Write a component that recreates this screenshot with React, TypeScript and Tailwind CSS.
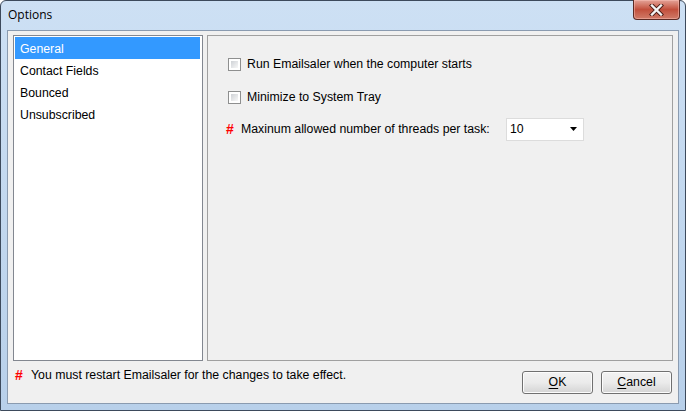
const Check = ({ label }: { label: string }) => (
  <div className="flex items-center gap-[6px] h-[13px]">
    <div className="w-[13px] h-[13px] border border-[#8e8f8f] bg-white p-[2px]">
      <div className="w-full h-full bg-linear-to-br from-[#cfd2d6] to-[#f8f8f8]" />
    </div>
    <span>{label}</span>
  </div>
);

const Button = ({ hot, rest }: { hot: string; rest: string }) => (
  <button className="w-[71px] h-[23px] rounded-[3px] border border-[#707070] bg-linear-to-b from-[#f2f2f2] via-[#ebebeb] to-[#d4d4d4] shadow-[inset_0_0_0_1px_#fcfcfc] text-black leading-none">
    <span className="underline underline-offset-[2px]">{hot}</span>
    {rest}
  </button>
);

const items = ['General', 'Contact Fields', 'Bounced', 'Unsubscribed'];

export default function App() {
  return (
    <div
      className="w-[686px] h-[411px] flex flex-col border border-[#3d4a5c] rounded-t-[6px] bg-linear-to-b from-[#cde0f4] to-[#b8d0ea] text-[12.3px] text-black"
      style={{ fontFamily: '"Liberation Sans", Arial, sans-serif' }}
    >
      {/* title bar */}
      <div className="h-[29px] flex items-start justify-between">
        <span
          className="pl-[7px] pt-[6px] text-[12px] leading-[16px]"
          style={{ fontFamily: '"Segoe UI", "Open Sans", sans-serif' }}
        >
          Options
        </span>
        <div className="mr-[5px] -mt-px w-[47px] h-[20px] rounded-b-[4px] border border-[#5b2a24] border-t-0 bg-linear-to-b from-[#e3a398] via-[#c24f3c] to-[#d07a68] shadow-[inset_0_0_0_1px_rgba(255,200,190,0.45)] flex items-center justify-center">
          <svg width="15" height="12" viewBox="0 0 15 12">
            <path
              d="M3 1.5 L12 10.5 M12 1.5 L3 10.5"
              stroke="#4a1d16"
              strokeWidth="4.2"
              strokeLinecap="square"
              fill="none"
            />
            <path
              d="M3 1.5 L12 10.5 M12 1.5 L3 10.5"
              stroke="#f4f4f4"
              strokeWidth="2.4"
              strokeLinecap="square"
              fill="none"
            />
          </svg>
        </div>
      </div>

      {/* client area */}
      <div className="mx-[6px] mb-[6px] flex-1 border border-[#8a9bb0] bg-[#f0f0f0] flex flex-col">
        <div className="flex pt-[4px] pl-[5px] gap-[4px]">
          <div className="w-[190px] h-[326px] border border-[#828790] bg-white pl-px pr-[2px] pt-[1px]">
            {items.map((it, i) => (
              <div
                key={it}
                className={
                  i === 0
                    ? 'h-[22px] flex items-center pl-[5px] pt-[2px] bg-[#3399ff] text-white'
                    : 'h-[22px] flex items-center pl-[5px] pt-[2px]'
                }
              >
                {it}
              </div>
            ))}
          </div>

          <div className="w-[466px] h-[326px] border border-[#a0a0a0] pt-[22px] pl-[20px]">
            <Check label="Run Emailsaler when the computer starts" />
            <div className="mt-[20px]">
              <Check label="Minimize to System Tray" />
            </div>
            <div className="mt-[14px] -ml-[2px] flex items-center">
              <span className="text-[#ff0000] font-bold text-[14px] w-[15px]">#</span>
              <span>Maxinum allowed number of threads per task:</span>
              <div className="ml-auto mr-[88px] w-[78px] h-[23px] bg-white border border-[#dcdcdc] flex items-center justify-between pl-[3px] pr-[5px]">
                <span>10</span>
                <svg width="8" height="5" viewBox="0 0 8 5">
                  <path d="M0 0 H7 L3.5 4 Z" fill="#000" />
                </svg>
              </div>
            </div>
          </div>
        </div>

        <div className="flex items-start justify-between pl-[7px] pr-[6px]">
          <div className="mt-[7px] flex items-center leading-[14px]">
            <span className="text-[#ff0000] font-bold text-[14px] w-[16px]">#</span>
            <span>You must restart Emailsaler for the changes to take effect.</span>
          </div>
          <div className="mt-[10px] flex gap-[8px]">
            <Button hot="O" rest="K" />
            <Button hot="C" rest="ancel" />
          </div>
        </div>
      </div>
    </div>
  );
}
